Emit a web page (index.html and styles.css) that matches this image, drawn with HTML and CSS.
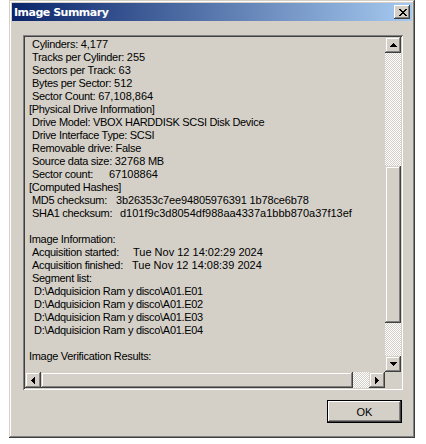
FILE: index.html
```html
<!DOCTYPE html>
<html>
<head>
<meta charset="utf-8">
<title>Image Summary</title>
<link rel="stylesheet" href="styles.css">
</head>
<body>
<div class="window">
  <div class="titlebar">
    <span class="title">Image Summary</span>
    <button class="close" aria-label="Close">
      <svg width="8" height="7" viewBox="0 0 8 7" shape-rendering="crispEdges"><path d="M0 0h2v1h1v1h2V1h1V0h2v1H7v1H6v1H5v1h1v1h1v1h1v1H6V6H5V5H3v1H2v1H0V6h1V5h1V4h1V3H2V2H1V1H0z" fill="#000"/></svg>
    </button>
  </div>
  <div class="client">
    <div class="editbox">
      <div class="text">
        <div class="i1">Cylinders: <span class="num">4,177</span></div>
        <div class="i1">Tracks per Cylinder: <span class="num">255</span></div>
        <div class="i1">Sectors per Track: <span class="num">63</span></div>
        <div class="i1">Bytes per Sector: <span class="num">512</span></div>
        <div class="i1">Sector Count: <span class="num">67,108,864</span></div>
        <div>[Physical Drive Information]</div>
        <div class="i1">Drive Model: VBOX HARDDISK SCSI Disk Device</div>
        <div class="i1">Drive Interface Type: SCSI</div>
        <div class="i1">Removable drive: False</div>
        <div class="i1">Source data size: <span class="num">32768</span> MB</div>
        <div class="i1"><span class="lbl w-sc">Sector count:</span><span class="num">67108864</span></div>
        <div>[Computed Hashes]</div>
        <div class="i1"><span class="lbl w-md5">MD5 checksum:</span><span class="num md5">3b26353c7ee94805976391 1b78ce6b78</span></div>
        <div class="i1"><span class="lbl w-sha">SHA1 checksum:</span><span class="num">d101f9c3d8054df988aa4337a1bbb870a37f13ef</span></div>
        <div class="blank"></div>
        <div>Image Information:</div>
        <div class="i1"><span class="lbl w-acs">Acquisition started:</span><span class="num">Tue Nov 12 14:02:29 2024</span></div>
        <div class="i1"><span class="lbl w-acf">Acquisition finished:</span><span class="num">Tue Nov 12 14:08:39 2024</span></div>
        <div class="i1">Segment list:</div>
        <div class="i2">D:\Adquisicion Ram y disco\A01.E01</div>
        <div class="i2">D:\Adquisicion Ram y disco\A01.E02</div>
        <div class="i2">D:\Adquisicion Ram y disco\A01.E03</div>
        <div class="i2">D:\Adquisicion Ram y disco\A01.E04</div>
        <div class="blank"></div>
        <div>Image Verification Results:</div>
      </div>
      <div class="vscroll">
        <div class="sbtn"><svg width="7" height="4" viewBox="0 0 7 4" shape-rendering="crispEdges"><path d="M3 0h1v1h1v1h1v1h1v1H0V3h1V2h1V1h1z"/></svg></div>
        <div class="track vt1"></div>
        <div class="thumb vthumb"></div>
        <div class="track vt2"></div>
        <div class="sbtn"><svg width="7" height="4" viewBox="0 0 7 4" shape-rendering="crispEdges"><path d="M0 0h7v1H6v1H5v1H4v1H3V3H2V2H1V1H0z"/></svg></div>
      </div>
      <div class="hscroll">
        <div class="sbtn"><svg width="4" height="7" viewBox="0 0 4 7" shape-rendering="crispEdges"><path d="M3 0h1v7H3V6H2V5H1V4H0V3h1V2h1V1h1z"/></svg></div>
        <div class="thumb hthumb"></div>
        <div class="track ht"></div>
        <div class="sbtn"><svg width="4" height="7" viewBox="0 0 4 7" shape-rendering="crispEdges"><path d="M0 0h1v1h1v1h1v1h1v1H3v1H2v1H1v1H0z"/></svg></div>
      </div>
      <div class="corner"></div>
    </div>
    <div class="buttons">
      <button class="ok">OK</button>
    </div>
  </div>
</div>
</body>
</html>
```

FILE: styles.css
```css
* { box-sizing: border-box; }
html, body { margin: 0; padding: 0; background: #fff; }
body { width: 426px; height: 444px; overflow: hidden; }

.window {
  margin-left: 9px;
  width: 406px;
  height: 438px;
  background: #d4d0c8;
  padding: 3px;
  box-shadow: inset -1px -1px #404040, inset 1px 1px #d4d0c8, inset -2px -2px #808080, inset 2px 2px #fff;
  display: flex;
  flex-direction: column;
}

.titlebar {
  height: 18px;
  flex: none;
  background: linear-gradient(to right, #0a246a, #a6caf0);
  display: flex;
  align-items: center;
  justify-content: space-between;
  padding: 0 2px 0 2px;
}
.title {
  color: #fff;
  font: bold 11px "DejaVu Sans", sans-serif;
  letter-spacing: -0.5px;
}
.close {
  width: 16px;
  height: 14px;
  padding: 0;
  margin: 0;
  border: 0;
  background: #d4d0c8;
  box-shadow: inset -1px -1px #404040, inset 1px 1px #fff, inset -2px -2px #808080;
  display: flex;
  align-items: center;
  justify-content: center;
  padding-left: 1px;
}

.client {
  flex: 1;
  display: flex;
  flex-direction: column;
  padding: 14px 9px 12px 11px;
}

.editbox {
  width: 380px;
  height: 355px;
  padding: 2px;
  box-shadow: inset 1px 1px #808080, inset -1px -1px #fff, inset 2px 2px #404040, inset -2px -2px #d4d0c8;
  display: grid;
  grid-template-columns: 1fr 16px;
  grid-template-rows: 1fr 16px;
}

.text {
  overflow: hidden;
  padding: 1px 0 0 4px;
  font: 11px "Liberation Sans", Arial, sans-serif;
  letter-spacing: -0.3px;
  line-height: 13px;
  color: #000;
}
.text > div { height: 13px; white-space: pre; }
.num { letter-spacing: 0; }
.num.md5 { letter-spacing: -0.15px; }
.i1 { padding-left: 3px; }
.i2 { padding-left: 5px; }
.lbl { display: inline-block; }
.w-sc { width: 77px; }
.w-md5 { width: 84px; }
.w-sha { width: 88px; }
.w-acs { width: 101px; }
.w-acf { width: 100px; }

.vscroll { display: flex; flex-direction: column; }
.hscroll { display: flex; flex-direction: row; }

.sbtn {
  width: 16px;
  height: 16px;
  flex: none;
  background: #d4d0c8;
  box-shadow: inset -1px -1px #404040, inset 1px 1px #d4d0c8, inset -2px -2px #808080, inset 2px 2px #fff;
  display: flex;
  align-items: center;
  justify-content: center;
}
.sbtn svg { fill: #000; }
.thumb {
  background: #d4d0c8;
  box-shadow: inset -1px -1px #404040, inset 1px 1px #d4d0c8, inset -2px -2px #808080, inset 2px 2px #fff;
  flex: none;
}
.track {
  background: repeating-conic-gradient(#fff 0 25%, #d4d0c8 0 50%) 0 0 / 2px 2px;
  flex: none;
}
.vt1 { height: 113px; }
.vthumb { height: 157px; }
.vt2 { height: 33px; }
.hthumb { width: 312px; }
.ht { width: 16px; }
.corner { background: #d4d0c8; }

.buttons {
  display: flex;
  justify-content: flex-end;
  margin-top: 10px;
  padding-right: 1px;
}
.ok {
  width: 75px;
  height: 23px;
  margin: 0;
  padding: 0;
  border: 1px solid #000;
  background: #d4d0c8;
  box-shadow: inset -1px -1px #404040, inset 1px 1px #fff, inset -2px -2px #808080;
  font: 11px "Liberation Sans", Arial, sans-serif;
  color: #000;
}
```
